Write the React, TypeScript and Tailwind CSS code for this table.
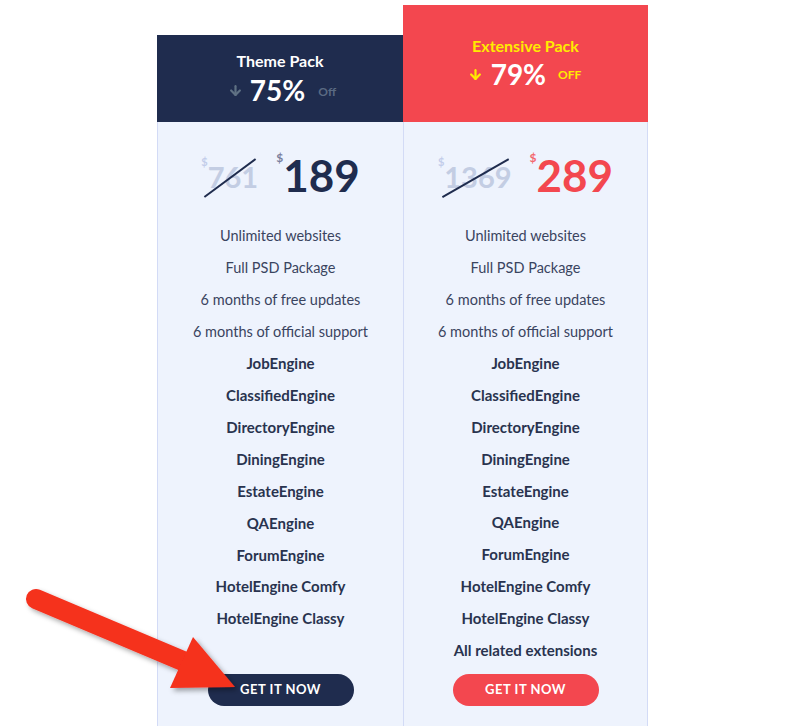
import { ArrowDown } from 'lucide-react';

type Plan = {
    name: string;
    off: string;
    offLabel: string;
    oldPrice: string;
    price: string;
    features: string[];
    extras: string[];
    dark: boolean;
};

const basics = ['Unlimited websites', 'Full PSD Package', '6 months of free updates', '6 months of official support'];
const engines = [
    'JobEngine',
    'ClassifiedEngine',
    'DirectoryEngine',
    'DiningEngine',
    'EstateEngine',
    'QAEngine',
    'ForumEngine',
    'HotelEngine Comfy',
    'HotelEngine Classy',
];

const plans: Plan[] = [
    { name: 'Theme Pack', off: '75%', offLabel: 'Off', oldPrice: '761', price: '189', features: basics, extras: engines, dark: true },
    {
        name: 'Extensive Pack',
        off: '79%',
        offLabel: 'OFF',
        oldPrice: '1369',
        price: '289',
        features: basics,
        extras: [...engines, 'All related extensions'],
        dark: false,
    },
];

function PlanCard({ plan }: { plan: Plan }) {
    return (
        <div className={`flex flex-col ${plan.dark ? 'w-[246px] mt-[30px]' : 'w-[245px]'}`}>
            {plan.dark ? (
                <div className="h-[87px] bg-[#1f2c4e] flex flex-col items-center pt-[15px]">
                    <h3 className="text-[16px] font-bold text-white leading-[22px]">{plan.name}</h3>
                    <div className="flex items-center mt-[2px] ml-[4px]">
                        <ArrowDown className="w-[15px] h-[15px] text-[#5f7184]" strokeWidth={3.5} />
                        <span className="ml-[7px] text-[28px] font-bold text-white leading-[32px]">{plan.off}</span>
                        <span className="ml-[13px] mt-[4px] text-[12px] font-bold text-[#5a6a82]">{plan.offLabel}</span>
                    </div>
                </div>
            ) : (
                <div className="h-[117px] bg-[#f3474f] flex flex-col items-center pt-[30px]">
                    <h3 className="text-[16px] font-bold text-[#ffeb00] leading-[22px]">{plan.name}</h3>
                    <div className="flex items-center mt-[1px] mr-[2px]">
                        <ArrowDown className="w-[15px] h-[15px] text-[#ffeb00]" strokeWidth={3.5} />
                        <span className="ml-[8px] text-[28px] font-bold text-white leading-[32px]">{plan.off}</span>
                        <span className="ml-[12px] mt-[2px] text-[12px] font-bold text-[#ffeb00]">{plan.offLabel}</span>
                    </div>
                </div>
            )}

            <div className={`flex-1 bg-[#eef3fd] border-l border-[#d3dbf6] flex flex-col items-center ${plan.dark ? '' : 'border-r'}`}>
                <div className="h-[98px] flex items-center justify-center gap-[18px] pt-[8px]">
                    <div className="relative flex items-start">
                        <span className="text-[11px] font-bold text-[#c3cdea] -mt-[2px]">$</span>
                        <span className="text-[29px] font-bold text-[#c3cde3] leading-[34px] mt-[4px]">{plan.oldPrice}</span>
                        <svg className="absolute left-0 top-0 w-full h-full overflow-visible" viewBox="0 0 100 100" preserveAspectRatio="none">
                            <line x1="6" y1="108" x2="96" y2="8" stroke="#1f2c4e" strokeWidth="2" vectorEffect="non-scaling-stroke" />
                        </svg>
                    </div>
                    <div className="flex items-start">
                        <span className={`text-[12px] font-bold -mt-[4px] ${plan.dark ? 'text-[#7a7f9e]' : 'text-[#f3676e]'}`}>$</span>
                        <span className={`text-[44px] font-bold leading-[44px] ${plan.dark ? 'text-[#1f2c4e]' : 'text-[#f3474f]'}`}>
                            {plan.price}
                        </span>
                    </div>
                </div>

                <ul className="h-[446px] flex flex-col items-center text-[14.5px] text-[#3a4460]">
                    {plan.features.map(f => (
                        <li key={f} className="h-[31.9px] flex items-center">
                            {f}
                        </li>
                    ))}
                    {plan.extras.map(f => (
                        <li key={f} className="h-[31.9px] flex items-center text-[15px] font-bold text-[#29334f]">
                            {f}
                        </li>
                    ))}
                </ul>

                <button
                    className={`mt-[8px] w-[146px] h-[32px] rounded-full text-white text-[13px] font-bold tracking-[0.5px] ${
                        plan.dark ? 'bg-[#1f2c4e]' : 'bg-[#f3474f]'
                    }`}
                >
                    GET IT NOW
                </button>
            </div>
        </div>
    );
}

export default function App() {
    return (
        <div className="relative w-[800px] h-[726px] bg-white overflow-hidden" style={{ fontFamily: 'Lato, "Open Sans", sans-serif' }}>
            <div className="flex h-full pt-[5px] pl-[157px]">
                {plans.map(p => (
                    <PlanCard key={p.name} plan={p} />
                ))}
            </div>

            {/* red callout arrow */}
            <svg className="absolute left-0 top-0 pointer-events-none" width="800" height="726">
                <defs>
                    <filter id="shadow" x="-20%" y="-20%" width="140%" height="140%">
                        <feDropShadow dx="3" dy="3" stdDeviation="2.5" floodColor="#000" floodOpacity="0.35" />
                    </filter>
                </defs>
                <g filter="url(#shadow)" fill="#f5301f">
                    <line x1="36" y1="599" x2="190" y2="664" stroke="#f5301f" strokeWidth="20" strokeLinecap="round" />
                    <polygon points="193,637 235,687 170,688" />
                </g>
            </svg>
        </div>
    );
}
